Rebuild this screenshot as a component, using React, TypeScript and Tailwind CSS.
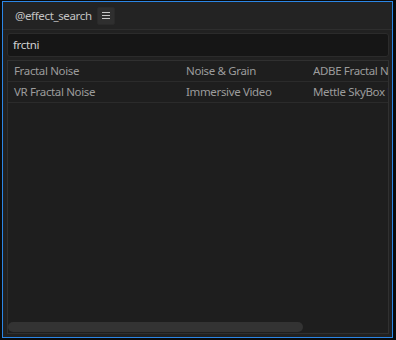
import React from "react";

const rows = [
  ["Fractal Noise", "Noise & Grain", "ADBE Fractal Noise"],
  ["VR Fractal Noise", "Immersive Video", "Mettle SkyBox Fractal Noise"],
];

export default function App() {
  return (
    <div
      className="w-[396px] h-[340px] bg-[#0a0a0a] pl-[2px] pt-px"
      style={{ fontFamily: '"Noto Sans", "Open Sans", sans-serif' }}
    >
      <div className="w-[391px] h-[337px] border border-[#2b86e6] bg-[#232323] flex flex-col">
        <div className="h-[28px] shrink-0 flex items-center pl-[12px] border-b border-[#2e2e2e]">
          <span className="text-[11.5px] tracking-[-0.35px] text-[#c4c4c4] leading-none">@effect_search</span>
          <div className="ml-[5px] w-[18px] h-[18px] rounded-[2px] bg-[#2f2f2f] border border-[#2a2a2a] flex flex-col items-center justify-center gap-[2px]">
            <div className="w-[8px] h-px bg-[#c8c8c8]" />
            <div className="w-[8px] h-px bg-[#c8c8c8]" />
            <div className="w-[8px] h-px bg-[#c8c8c8]" />
          </div>
        </div>
        <div className="flex-1 flex flex-col bg-[#212121] pl-[4px] pr-[3px] pt-[3px] pb-[3px] min-h-0">
          <div className="h-[24px] shrink-0 bg-[#161616] border border-[#2b2b2b] rounded-[3px] flex items-center pl-[5px]">
            <span className="text-[11.5px] tracking-[-0.35px] text-[#d2d2d2]">frctni</span>
          </div>
          <div className="mt-[3px] flex-1 border border-[#303030] bg-[#1e1e1e] flex flex-col overflow-hidden">
            {rows.map((r, i) => (
              <div
                key={i}
                className="h-[21px] shrink-0 flex items-center border-b border-[#2b2b2b] text-[11.5px] tracking-[-0.35px] text-[#9c9c9c] whitespace-nowrap overflow-hidden"
              >
                <div className="w-[178px] shrink-0 pl-[6px]">{r[0]}</div>
                <div className="w-[127px] shrink-0">{r[1]}</div>
                <div className="flex-1 overflow-hidden">{r[2]}</div>
              </div>
            ))}
            <div className="flex-1" />
            <div className="h-[11px] shrink-0 flex items-end pb-px">
              <div className="w-[295px] h-[10px] rounded-full bg-[#333333]" />
            </div>
          </div>
        </div>
      </div>
    </div>
  );
}
